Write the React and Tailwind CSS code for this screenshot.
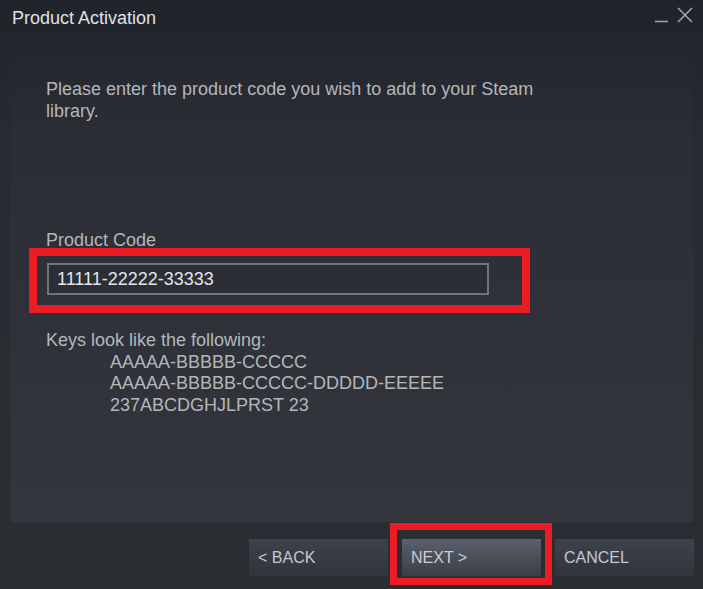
import React from "react";

function Button({ label, highlight }) {
  return (
    <div className="relative">
      <button
        className={
          "w-[139px] h-[37px] text-left pl-[9px] text-[16px] " +
          (highlight
            ? "bg-gradient-to-b from-[#5b606c] to-[#3a3e47] text-[#c9ced6]"
            : "bg-gradient-to-b from-[#3e424b] to-[#31343b] text-[#c3c8cf]")
        }
      >
        {label}
      </button>
      {highlight && (
        <div className="absolute left-[-12px] right-[-11px] top-[-16px] bottom-[-9px] border-[7.5px] border-[#ed1c24] pointer-events-none" />
      )}
    </div>
  );
}

export default function App() {
  return (
    <div
      className="w-[703px] h-[589px] flex flex-col bg-gradient-to-b from-[#20242a] via-[#282b31] via-25% to-[#2a2d32] overflow-hidden"
      style={{ fontFamily: '"Liberation Sans", Arial, sans-serif' }}
    >
      {/* title bar */}
      <div className="h-[38px] flex items-start justify-between pl-[12px] pr-[10px] pt-[8px]">
        <div className="text-[18px] leading-[20px] text-[#dfe1e4]">Product Activation</div>
        <div className="flex items-start gap-[9px]">
          <svg width="14" height="16" viewBox="0 0 14 16" className="mt-[-1px]">
            <line x1="1" y1="14.5" x2="14" y2="14.5" stroke="#9b9ea3" strokeWidth="1.6" />
          </svg>
          <svg width="16" height="16" viewBox="0 0 16 16" className="mt-[-1px]">
            <path d="M1 1L15 15M15 1L1 15" stroke="#a3a6ab" strokeWidth="1.5" fill="none" />
          </svg>
        </div>
      </div>

      {/* content panel */}
      <div className="mx-[10px] h-[484px] bg-gradient-to-b from-transparent via-[#2d3037] via-45% to-[#33363d] pl-[36px] pt-[40px] text-[18px] leading-[22px] text-[#b3b7bc]">
        <p className="w-[500px]">
          Please enter the product code you wish to add to your Steam library.
        </p>

        <div className="mt-[107px]">Product Code</div>

        <div className="relative ml-[1px] mt-[12px] w-[442px]">
          <div className="h-[32px] border-2 border-[#6f747d] bg-[#2b2e35] flex items-center pl-[8px] text-[18px] text-[#e3e5e8]">
            11111-22222-33333
          </div>
          <div className="absolute left-[-18px] top-[-15px] right-[-41px] bottom-[-18px] border-8 border-[#ed1c24]" />
        </div>

        <div className="mt-[35px] leading-[21.5px]">
          <div>Keys look like the following:</div>
          <div className="pl-[64px]">AAAAA-BBBBB-CCCCC</div>
          <div className="pl-[64px]">AAAAA-BBBBB-CCCCC-DDDDD-EEEEE</div>
          <div className="pl-[64px]">237ABCDGHJLPRST 23</div>
        </div>
      </div>

      {/* footer */}
      <div className="flex justify-end gap-[14px] pr-[9px] pt-[17px]">
        <Button label="< BACK" />
        <Button label="NEXT >" highlight />
        <Button label="CANCEL" />
      </div>
    </div>
  );
}
